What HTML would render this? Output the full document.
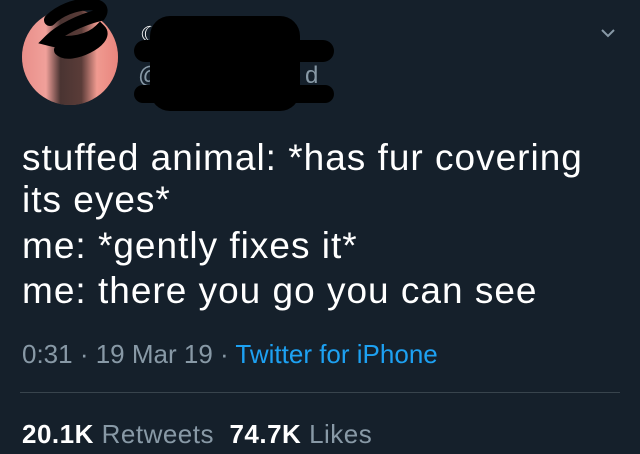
<!DOCTYPE html>
<html><head><style>
body{margin:0;width:640px;height:454px;background:#15202b;overflow:hidden;font-family:"Liberation Sans",sans-serif;position:relative}
.a{position:absolute}
.t{left:22px;color:#fff;font-size:37px;line-height:37px;white-space:nowrap;letter-spacing:1px}
</style></head><body>
<div class="a" style="left:22px;top:9px;width:96px;height:96px;border-radius:50%;overflow:hidden;background:#6b4a44">
<div class="a" style="left:0;top:0;width:96px;height:96px;background:linear-gradient(90deg,#e98f8a 0,#f0a09a 25%,#4a3432 40%,#5a3c38 62%,#f09a90 78%,#e8857e 100%)"></div>
</div>
<svg class="a" style="left:30px;top:0" width="80" height="60"><path d="M20 20 C40 0 80 0 70 15 C50 20 30 30 20 40 C40 45 60 40 70 30 C80 40 40 60 30 50" stroke="#000" stroke-width="12" fill="none" stroke-linecap="round"/></svg>
<div class="a" style="left:140px;top:22px;color:#fff;font-size:22px">☾</div>
<div class="a" style="left:280px;top:22px;color:#fff;font-size:22px">☾</div>
<div class="a" style="left:138px;top:62px;color:#8899a6;font-size:24px">@</div>
<div class="a" style="left:305px;top:62px;color:#8899a6;font-size:24px">d</div>
<div class="a" style="left:150px;top:16px;width:150px;height:95px;background:#000;border-radius:20px"></div>
<div class="a" style="left:134px;top:40px;width:200px;height:22px;background:#000;border-radius:11px"></div>
<div class="a" style="left:134px;top:85px;width:200px;height:18px;background:#000;border-radius:9px"></div>
<svg class="a" style="left:600px;top:28px" width="16" height="12"><path d="M2 2 L8 8 L14 2" stroke="#8899a6" stroke-width="2" fill="none"/></svg>
<div class="a t" style="top:139px">stuffed animal: *has fur covering</div>
<div class="a t" style="top:181px">its eyes*</div>
<div class="a t" style="top:227px">me: *gently fixes it*</div>
<div class="a t" style="top:272px">me: there you go you can see</div>
<div class="a" style="left:22px;top:339px;font-size:26px;color:#8899a6;white-space:nowrap">0:31 · 19 Mar 19 · <span style="color:#1da1f2">Twitter for iPhone</span></div>
<div class="a" style="left:20px;top:392px;width:600px;height:1px;background:#38444d"></div>
<div class="a" style="left:22px;top:419px;font-size:26px;color:#8899a6;white-space:nowrap;letter-spacing:0.5px"><b style="color:#fff">20.1K</b> Retweets &nbsp;<b style="color:#fff">74.7K</b> Likes</div>
</body></html>
